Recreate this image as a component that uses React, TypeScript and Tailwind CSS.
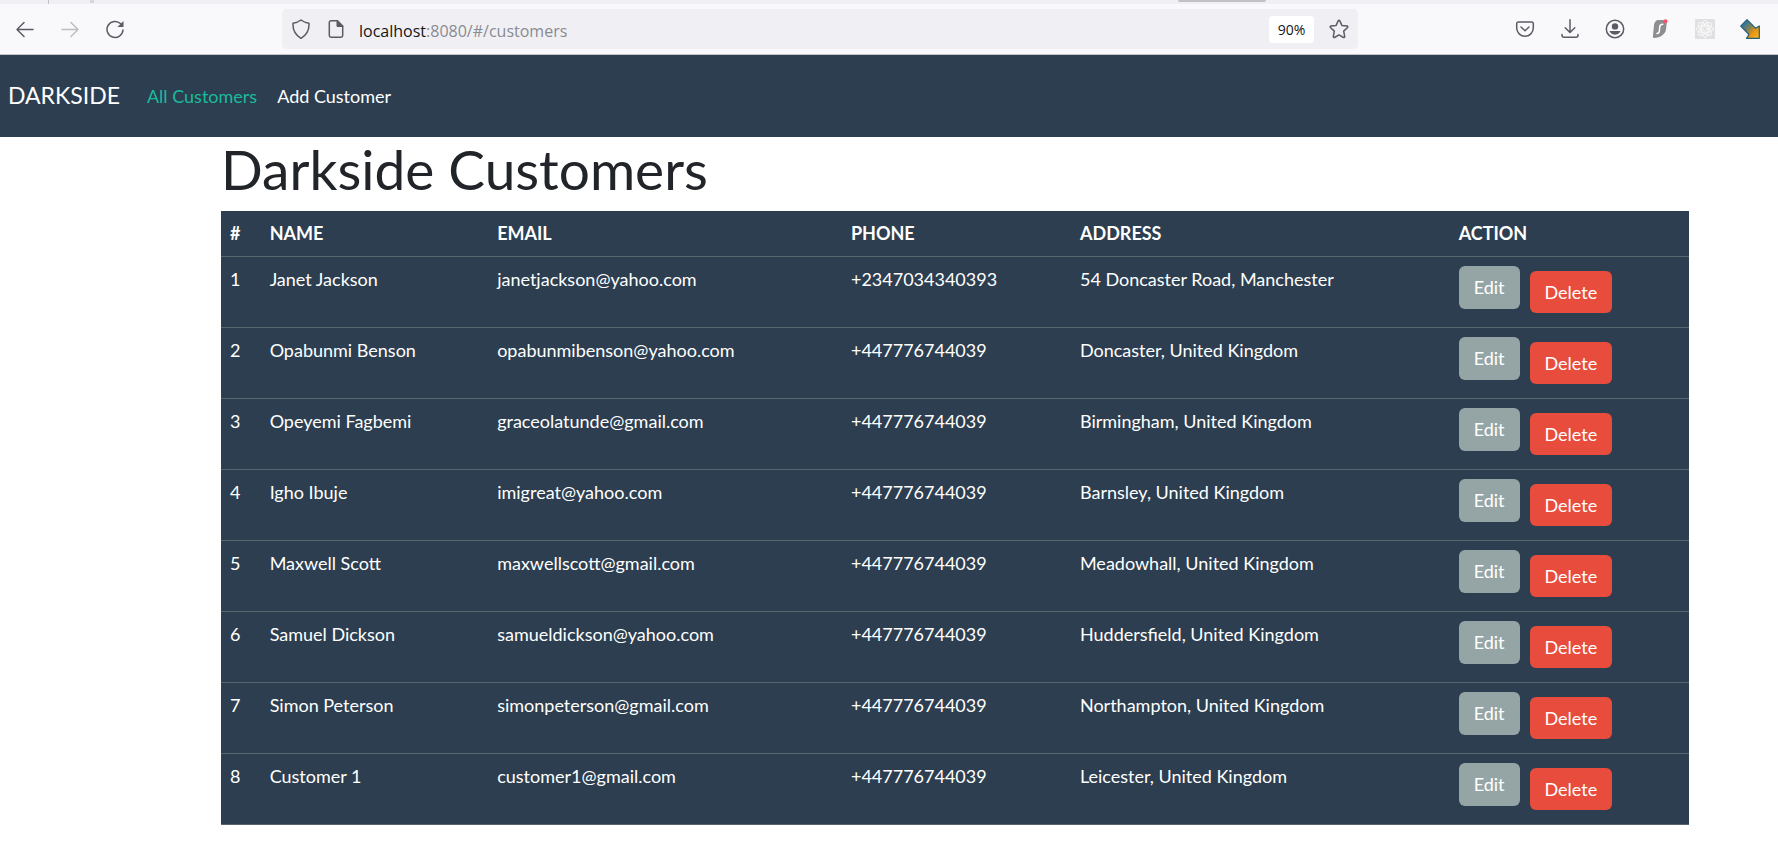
import React from "react";

type Customer = {
  name: string;
  email: string;
  phone: string;
  address: string;
};

const customers: Customer[] = [
  { name: "Janet Jackson", email: "janetjackson@yahoo.com", phone: "+2347034340393", address: "54 Doncaster Road, Manchester" },
  { name: "Opabunmi Benson", email: "opabunmibenson@yahoo.com", phone: "+447776744039", address: "Doncaster, United Kingdom" },
  { name: "Opeyemi Fagbemi", email: "graceolatunde@gmail.com", phone: "+447776744039", address: "Birmingham, United Kingdom" },
  { name: "Igho Ibuje", email: "imigreat@yahoo.com", phone: "+447776744039", address: "Barnsley, United Kingdom" },
  { name: "Maxwell Scott", email: "maxwellscott@gmail.com", phone: "+447776744039", address: "Meadowhall, United Kingdom" },
  { name: "Samuel Dickson", email: "samueldickson@yahoo.com", phone: "+447776744039", address: "Huddersfield, United Kingdom" },
  { name: "Simon Peterson", email: "simonpeterson@gmail.com", phone: "+447776744039", address: "Northampton, United Kingdom" },
  { name: "Customer 1", email: "customer1@gmail.com", phone: "+447776744039", address: "Leicester, United Kingdom" },
];

const columns = [
  { title: "#", width: "w-[2.7%]" },
  { title: "NAME", width: "w-[15.5%]" },
  { title: "EMAIL", width: "w-[24.1%]" },
  { title: "PHONE", width: "w-[15.6%]" },
  { title: "ADDRESS", width: "w-[25.8%]" },
  { title: "ACTION", width: "w-[16.3%]" },
];

function Icon({ children }: { children: React.ReactNode }) {
  return (
    <svg
      viewBox="0 0 20 20"
      className="block size-5"
      fill="none"
      stroke="currentColor"
      strokeWidth="1.5"
      strokeLinecap="round"
      strokeLinejoin="round"
      aria-hidden="true"
    >
      {children}
    </svg>
  );
}

function ToolButton({ label, dim, children }: { label: string; dim?: boolean; children: React.ReactNode }) {
  return (
    <button type="button" aria-label={label} className={dim ? "text-[#bdbdc2]" : "text-[#5b5b66]"}>
      <Icon>{children}</Icon>
    </button>
  );
}

function BrowserBar() {
  return (
    <header className="font-['Open_Sans',sans-serif]">
      <div className="flex h-1 overflow-hidden bg-[#f0f0f4]">
        <div className="ml-12 w-px bg-[#c4c4c8]" />
        <div className="ml-[41px] h-[3px] w-1 bg-[#d8d8dc]" />
        <div className="ml-[1084px] h-0.5 w-[88px] rounded-b bg-[#c2c2c6]" />
      </div>
      <div className="flex h-[51px] items-center border-b border-[#c3c3c8] bg-[#f9f9fb]">
        <div className="flex gap-[25px] pl-[15px]">
          <ToolButton label="Back">
            <path d="M18 10.500H2M9 3.500l-7 7 7 7" />
          </ToolButton>
          <ToolButton label="Forward" dim>
            <path d="M2 10.500h16M11 3.500l7 7-7 7" />
          </ToolButton>
          <ToolButton label="Reload">
            <path d="M18 11a8 8 0 1 1-2.300-6.200" />
            <path d="M18.500 2v5.500a.6.600 0 0 1-.6.600h-5.400z" fill="currentColor" stroke="none" />
          </ToolButton>
        </div>

        <div className="mx-[157px] flex h-10 min-w-0 flex-1 items-center rounded-[5px] bg-[#f0f0f4] px-[9px]">
          <button type="button" aria-label="Site protection" className="text-[#5b5b66]">
            <Icon>
              <path d="M10 1c2.200 1.700 5 2.700 8 3.200.4 6.600-2.200 11.600-8 15.200C4.200 15.800 1.600 10.800 2 4.200 5 3.700 7.800 2.700 10 1z" />
            </Icon>
          </button>
          <button type="button" aria-label="Site information" className="ml-[15px] text-[#5b5b66]">
            <Icon>
              <path d="M11.500 1.800H5A1.700 1.700 0 0 0 3.300 3.500v13A1.700 1.700 0 0 0 5 18.200h10a1.700 1.700 0 0 0 1.700-1.700V7z" />
              <path d="M11 1.800V7.500h5.700z" fill="currentColor" strokeWidth="1" />
            </Icon>
          </button>
          <p className="ml-[13px] flex-1 pt-[3px] text-base text-[#8a8a92]">
            <span className="text-[#15141a]">localhost</span>:8080/#/customers
          </p>
          <button type="button" className="h-[27px] w-[45px] rounded bg-white pt-0.5 text-sm text-[#15141a]">
            90%
          </button>
          <button type="button" aria-label="Bookmark this page" className="ml-[15px] text-[#5b5b66]">
            <Icon>
              <path d="M9.300 1.600a.8.800 0 0 1 1.400 0l2.200 4.800 5.200.7c.7.100 1 .9.500 1.400l-3.900 3.600 1 5.500c.1.700-.6 1.200-1.200.9L10 15.900l-4.500 2.600c-.6.300-1.300-.2-1.200-.9l1-5.500L1.400 8.500c-.5-.5-.2-1.300.5-1.400l5.200-.7z" />
            </Icon>
          </button>
        </div>

        <div className="flex gap-[25px] pr-[18px]">
          <ToolButton label="Save to Pocket">
            <path d="M3.500 3h13A1.800 1.800 0 0 1 18.300 4.800V9a8.300 8.300 0 0 1-16.600 0V4.800A1.800 1.800 0 0 1 3.500 3zM6 8l4 3.800L14 8" />
          </ToolButton>
          <ToolButton label="Downloads">
            <path d="M10 .8v12.400M5.200 8.700l4.800 4.800 4.800-4.800M2 15.500v.8a2 2 0 0 0 2 2h12a2 2 0 0 0 2-2v-.8" />
          </ToolButton>
          <ToolButton label="Account">
            <circle cx="10" cy="10" r="8.700" />
            <circle cx="10" cy="7.400" r="3.200" fill="currentColor" stroke="none" />
            <path d="M5.300 12h9.400c.6 0 .8.500.5 1A6.200 6.200 0 0 1 10 15.700 6.200 6.200 0 0 1 4.800 13c-.3-.5-.1-1 .5-1z" fill="currentColor" stroke="none" />
          </ToolButton>
          <ToolButton label="VPN extension">
            <path d="M8.500 1h7.200c.9 0 1.300.6 1.200 1.500L16 10.500c-.6 4.500-5.500 8.300-12 8.500-1 0-1.200-.6-1.100-1.400L4 6c.4-3 2-5 4.500-5z" fill="#8e8e92" stroke="none" />
            <path d="M12.800 5.200c-2 0-3 .8-3.100 2.800l-.3 4c-.1 1.600-1 2.400-2.400 2.500" stroke="#fff" />
            <circle cx="15.500" cy="2.200" r="2" fill="#ff4f6a" stroke="none" />
          </ToolButton>
          <ToolButton label="React developer tools">
            <rect width="20" height="20" rx="1" fill="#e0e0e2" stroke="none" />
            <g stroke="#fafafa" strokeWidth=".9">
              <circle cx="10" cy="10" r="2.300" />
              <ellipse cx="10" cy="10" rx="8.500" ry="3.800" />
              <ellipse cx="10" cy="10" rx="8.500" ry="3.800" transform="rotate(45 10 10)" />
              <ellipse cx="10" cy="10" rx="8.500" ry="3.800" transform="rotate(90 10 10)" />
              <ellipse cx="10" cy="10" rx="8.500" ry="3.800" transform="rotate(135 10 10)" />
            </g>
          </ToolButton>
          <ToolButton label="Download manager">
            <defs>
              <linearGradient id="arrow" x1="0" y1="0" x2="1" y2="1">
                <stop offset=".2" stopColor="#2f7896" />
                <stop offset=".48" stopColor="#8a8050" />
                <stop offset=".68" stopColor="#e8960f" />
                <stop offset="1" stopColor="#ffb51e" />
              </linearGradient>
            </defs>
            <path d="M7 .7l8.500 8.500 3.800-2.200v12.300H6.500L9 15.500.7 7.200z" fill="url(#arrow)" stroke="#1f5f7c" strokeWidth="1.200" />
          </ToolButton>
        </div>
      </div>
    </header>
  );
}

function NavBar() {
  return (
    <nav className="flex h-[82px] items-center bg-[#2c3e50] px-2 text-lg text-white">
      <a href="#/" className="mr-[27px] text-[23px]">
        DARKSIDE
      </a>
      <ul className="flex gap-5">
        <li>
          <a href="#/customers" className="text-[#18bc9c]">
            All Customers
          </a>
        </li>
        <li>
          <a href="#/add">Add Customer</a>
        </li>
      </ul>
    </nav>
  );
}

function CustomerTable() {
  return (
    <table className="w-full table-fixed border-collapse bg-[#2c3e50] text-left text-lg leading-[27px] text-white">
      <thead>
        <tr className="border-b border-[#56656e]">
          {columns.map((column) => (
            <th key={column.title} scope="col" className={`p-[9px] font-bold ${column.width}`}>
              {column.title}
            </th>
          ))}
        </tr>
      </thead>
      <tbody>
        {customers.map((customer, index) => (
          <tr key={customer.name} className="h-[71px] border-b border-[#56656e] align-top">
            <td className="p-[9px]">{index + 1}</td>
            <td className="p-[9px]">{customer.name}</td>
            <td className="p-[9px]">{customer.email}</td>
            <td className="p-[9px]">{customer.phone}</td>
            <td className="p-[9px]">{customer.address}</td>
            <td className="p-[9px]">
              <div className="flex items-start gap-[10px]">
                <button type="button" className="h-[43px] rounded-md bg-[#95a5a6] px-[15px]">
                  Edit
                </button>
                <button type="button" className="mt-[5px] h-[42px] rounded-md bg-[#e74c3c] px-[15px]">
                  Delete
                </button>
              </div>
            </td>
          </tr>
        ))}
      </tbody>
    </table>
  );
}

export default function App() {
  return (
    <div className="min-h-screen bg-white font-[Lato,sans-serif]">
      <BrowserBar />
      <NavBar />
      <main className="pr-[89px] pl-[221px]">
        <h1 className="mb-[9px] text-[55px] leading-[65px] text-[#212529]">Darkside Customers</h1>
        <CustomerTable />
      </main>
    </div>
  );
}
